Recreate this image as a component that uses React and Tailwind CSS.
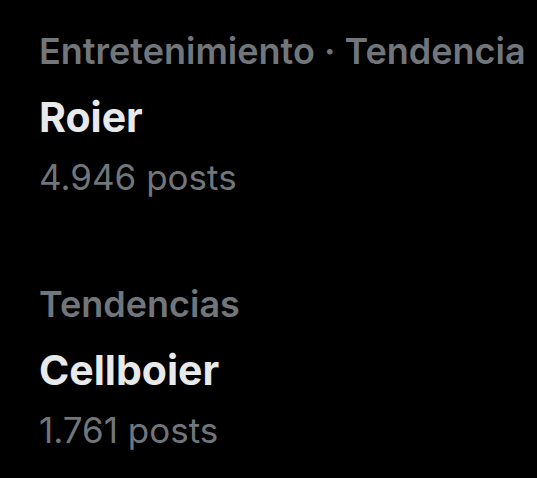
const trends = [
  { label: "Entretenimiento · Tendencia", name: "Roier", posts: "4.946 posts" },
  { label: "Tendencias", name: "Cellboier", posts: "1.761 posts" },
];

export default function App() {
  return (
    <div
      className="w-[537px] h-[478px] bg-black overflow-hidden pt-[29px] pl-[39px]"
      style={{ fontFamily: "Inter, 'Noto Sans', sans-serif" }}
    >
      <div className="flex flex-col gap-[83px]">
        {trends.map((t) => (
          <div key={t.name} className="flex flex-col">
            <p className="text-[36px] leading-[44px] font-semibold text-[#71767b] whitespace-nowrap">
              {t.label}
            </p>
            <p className="mt-[20px] text-[41px] leading-[48px] font-bold text-[#e7e9ea]">
              {t.name}
            </p>
            <p className="mt-[14px] text-[35px] leading-[44px] text-[#71767b]">
              {t.posts}
            </p>
          </div>
        ))}
      </div>
    </div>
  );
}
